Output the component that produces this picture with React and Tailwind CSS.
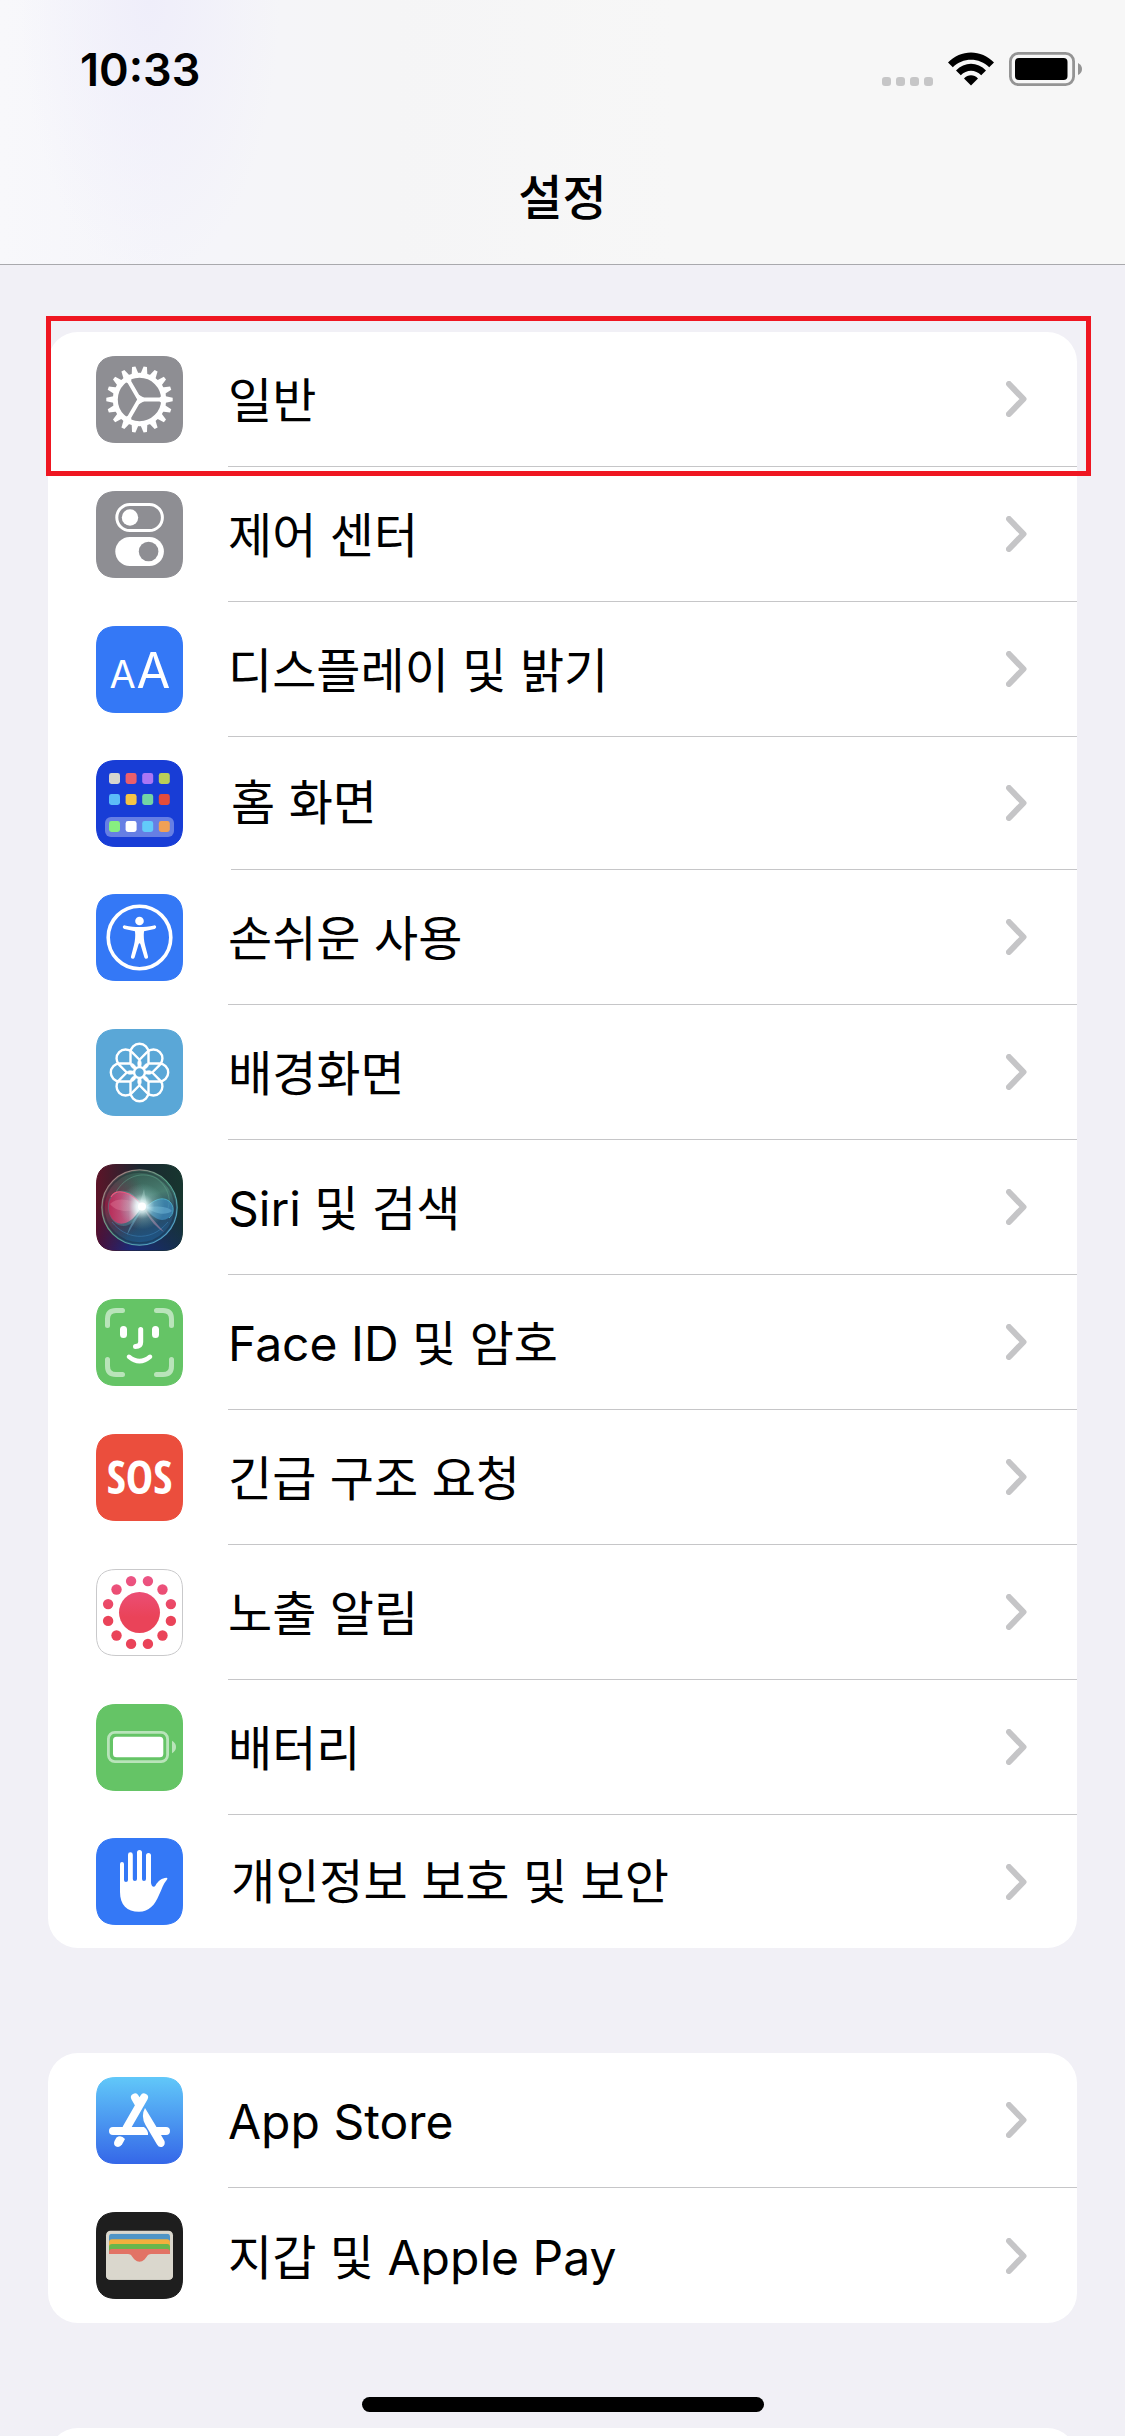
import React from "react";

const ICON = "block h-[87px] w-[87px] shrink-0";

const TILE_SHAPE =
  "M20 .5H67C80 .5 86.5 7 86.5 20V67C86.5 80 80 86.5 67 86.5H20C7 86.5 .5 80 .5 67V20C.5 7 7 .5 20 .5Z";

function Tile({ fill, stroke = fill, children, defs }) {
  return (
    <svg viewBox="0 0 87 87" className={ICON} aria-hidden="true">
      {defs && <defs>{defs}</defs>}
      <path d={TILE_SHAPE} fill={fill} stroke={stroke} strokeWidth="1" />
      {children}
    </svg>
  );
}

const around = (n, start = 0) => Array.from({ length: n }, (_, i) => start + (360 / n) * i);

function GeneralIcon() {
  return (
    <Tile fill="#8e8e93">
      <g transform="translate(43.5 43.5)" fill="#fff">
        {around(18).map((a) => (
          <path key={a} d="M25 -3.6L33.2 -1.7V1.7L25 3.6Z" transform={`rotate(${a})`} />
        ))}
        <circle r="24.2" fill="none" stroke="#fff" strokeWidth="5" />
        {[0, 120, 240].map((a) => (
          <path key={a} d="M0 -2H20L23 -4V4L20 2H0Z" transform={`rotate(${a})`} />
        ))}
        <path d="M4.5 -1.8V1.8L-.7 4.8L-3.8 3L-1.5 0L-3.8 -3L-.7 -4.8Z" />
      </g>
    </Tile>
  );
}

function ControlCenterIcon() {
  return (
    <Tile fill="#8e8e93">
      <rect x="20.8" y="13.4" width="45.6" height="26.2" rx="13.1" fill="none" stroke="#fff" strokeWidth="3" />
      <circle cx="34" cy="26.5" r="8.2" fill="#fff" />
      <rect x="19.3" y="46" width="48.6" height="29" rx="14.5" fill="#fff" />
      <circle cx="52.6" cy="60.5" r="9.8" fill="#8e8e93" />
    </Tile>
  );
}

function DisplayIcon() {
  return (
    <Tile fill="#3478f6">
      <g fill="#fff" fontFamily="Inter, sans-serif" fontWeight="400" textAnchor="middle">
        <text x="26.5" y="61.5" fontSize="38">A</text>
        <text x="57.4" y="61.5" fontSize="49">A</text>
      </g>
    </Tile>
  );
}

const HOME_APPS = [
  [13, ["#d6d5ce", "#ea5f6b", "#ab76f5", "#bacf57"]],
  [34, ["#5cbcf8", "#f5c445", "#72d5a5", "#e54c3b"]],
  [61, ["#87ef80", "#ffffff", "#62cbfa", "#f0a056"]],
];

function HomeScreenIcon() {
  return (
    <Tile fill="#183dd6">
      <rect x="9" y="57" width="69" height="20" rx="6" fill="#fff" opacity="0.34" />
      {HOME_APPS.map(([y, colors]) =>
        colors.map((c, i) => (
          <rect key={c} x={13 + i * 16.6} y={y} width="11" height="11" rx="2.4" fill={c} />
        ))
      )}
    </Tile>
  );
}

function AccessibilityIcon() {
  return (
    <Tile fill="#3478f6">
      <circle cx="43.5" cy="43.5" r="31.3" fill="none" stroke="#fff" strokeWidth="3.6" />
      <circle cx="43.5" cy="27" r="4.3" fill="#fff" />
      <path
        d="M29 31.4C34 32.4 39 33 43.5 33S53 32.4 58 31.4C60.5 31 61 34.4 58.6 35L48 37.2C47.4 42 48 46.5 49 51L52 62.6C52.5 65 49.3 65.8 48.4 63.5L44.5 50.5Q43.5 48 42.5 50.5L38.6 63.5C37.7 65.8 34.5 65 35 62.6L38 51C39 46.5 39.6 42 39 37.2L28.4 35C26 34.4 26.5 31 29 31.4Z"
        fill="#fff"
      />
    </Tile>
  );
}

function WallpaperIcon() {
  return (
    <Tile fill="#5aa7d7">
      <g transform="translate(43.5 43.5)" fill="none" stroke="#fff" strokeWidth="2.4">
        {around(8).map((a) => (
          <g key={a} transform={`rotate(${a})`}>
            <path d="M-9 -9V-19.7A9 9 0 0 1 9 -19.7V-9" />
            <path d="M0 -13.5C2.4 -11 2 -8 1 -5H-1C-2 -8 -2.4 -11 0 -13.5Z" fill="#fff" strokeWidth="0.6" />
          </g>
        ))}
        <circle r="5.4" />
      </g>
    </Tile>
  );
}

function SiriIcon() {
  return (
    <Tile
      fill="url(#siriBg)"
      defs={
        <>
          <linearGradient id="siriBg" x1="0" y1="0" x2="1" y2="0">
            <stop offset="0" stopColor="#5c1428" />
            <stop offset="0.5" stopColor="#1c2730" />
            <stop offset="1" stopColor="#17362f" />
          </linearGradient>
          <linearGradient id="siriLow" x1="0" y1="0" x2="1" y2="0">
            <stop offset="0" stopColor="#4a0f3a" />
            <stop offset="0.4" stopColor="#1b2a7c" />
            <stop offset="1" stopColor="#16304c" />
          </linearGradient>
          <linearGradient id="siriFade" x1="0" y1="0" x2="0" y2="1">
            <stop offset="0.45" stopColor="#000" />
            <stop offset="1" stopColor="#fff" />
          </linearGradient>
          <mask id="siriMask">
            <rect width="87" height="87" fill="url(#siriFade)" />
          </mask>
          <linearGradient id="siriRim" x1="0" y1="0" x2="1" y2="1">
            <stop offset="0" stopColor="#b9707c" />
            <stop offset="0.5" stopColor="#58a487" />
            <stop offset="1" stopColor="#4f9ee0" />
          </linearGradient>
          <linearGradient id="siriBall" x1="0.3" y1="0" x2="0.6" y2="1">
            <stop offset="0" stopColor="#32564c" />
            <stop offset="0.4" stopColor="#487c70" />
            <stop offset="0.65" stopColor="#2a4a62" />
            <stop offset="1" stopColor="#1d5487" />
          </linearGradient>
          <radialGradient id="siriDusk" cx="0.05" cy="0.45" r="0.55">
            <stop offset="0" stopColor="#8a1f42" />
            <stop offset="1" stopColor="#5a2138" stopOpacity="0" />
          </radialGradient>
          <radialGradient id="siriGlow">
            <stop offset="0" stopColor="#fff" />
            <stop offset="0.25" stopColor="#eaffff" stopOpacity="0.8" />
            <stop offset="0.55" stopColor="#b4e4e2" stopOpacity="0.3" />
            <stop offset="1" stopColor="#8fd6cf" stopOpacity="0" />
          </radialGradient>
          <linearGradient id="siriPink" x1="0" y1="0" x2="1" y2="0">
            <stop offset="0" stopColor="#b82c58" />
            <stop offset="0.6" stopColor="#bd6088" />
            <stop offset="1" stopColor="#fff" />
          </linearGradient>
        </>
      }
    >
      <path d={TILE_SHAPE} fill="url(#siriLow)" mask="url(#siriMask)" />
      <circle cx="43.5" cy="43.5" r="37" fill="url(#siriBall)" />
      <circle cx="43.5" cy="43.5" r="37" fill="url(#siriDusk)" />
      <circle cx="43.5" cy="43.5" r="35.5" fill="none" stroke="#16202b" strokeOpacity="0.35" strokeWidth="1.6" />
      <circle cx="43.5" cy="43.5" r="37.6" fill="none" stroke="url(#siriRim)" strokeWidth="1.3" />
      <path d="M18 32C26 14 44 6 60 14C69 20 76 32 72 44" fill="none" stroke="#62a58d" strokeOpacity="0.5" />
      <path d="M16 58C28 74 54 80 72 58" fill="none" stroke="#3d86bd" strokeOpacity="0.5" />
      <path d="M46 43C36 20 14 24 12 40C10 60 34 76 46 43Z" fill="#5aa3b0" opacity="0.4" />
      <path d="M46 42C38 27 20 24 14.5 35C9 50 18 61 27 59.5C36 58 41 50 46 42Z" fill="url(#siriPink)" />
      <path d="M15 33C20 24 36 27 46 42" fill="none" stroke="#f0527c" strokeWidth="1.2" />
      <path d="M14 40C22 32 36 36 46 42C38 48 22 50 14 40Z" fill="#ef91ab" opacity="0.3" />
      <path d="M50 43C58 36 66 32 73 37C81 44 76 56 66 56C58 55 53 49 50 43Z" fill="#3f8ec2" opacity="0.7" />
      <path d="M50 43C58 36 66 32 73 37C79 42 78 50 73 54" fill="none" stroke="#4fb6cf" strokeWidth="1" strokeOpacity="0.8" />
      <path d="M50 43C60 42 72 42 76 47C70 52 58 50 50 43Z" fill="#7cc6e6" opacity="0.4" />
      <path d="M49 46L68 68C62 65 53 56 49 46Z" fill="#c794b4" opacity="0.5" />
      <path d="M46 46L31 71C33 62 39 53 46 46Z" fill="#79c7e8" opacity="0.4" />
      <path d="M48 25L51 42H43Z" fill="#c9f0e6" opacity="0.3" />
      <circle cx="46" cy="42.5" r="23" fill="url(#siriGlow)" />
      <circle cx="46" cy="42.5" r="4" fill="#fff" />
    </Tile>
  );
}

function FaceIdIcon() {
  return (
    <Tile fill="#65c466">
      <g fill="none" stroke="#fff" strokeLinecap="round">
        <path
          d="M11.5 26.500V20Q11.5 11.500 20 11.500H26.500M60.500 11.500H67Q75.500 11.500 75.500 20V26.500M75.500 60.500V67Q75.500 75.500 67 75.500H60.500M26.500 75.500H20Q11.500 75.500 11.500 67V60.500"
          strokeWidth="5"
          opacity="0.55"
        />
        <path d="M27.5 30.500V35.500M59.500 30.500V35.500" strokeWidth="7" />
        <path d="M44.7 30.500V43Q44.700 47.500 39.500 47.500" strokeWidth="5" />
        <path d="M33 57.800Q43.500 66.500 54 57.800" strokeWidth="4.5" />
      </g>
    </Tile>
  );
}

function SosIcon() {
  return (
    <Tile fill="#eb4e3d">
      <text
        x="43.5"
        y="59.5"
        fill="#fff"
        textAnchor="middle"
        fontFamily="'Open Sans Condensed', Roboto, sans-serif"
        fontWeight="700"
        fontSize="46"
      >
        SOS
      </text>
    </Tile>
  );
}

function ExposureIcon() {
  return (
    <Tile
      fill="#ffffff"
      stroke="#c9c9cb"
      defs={
        <linearGradient id="exposure" gradientUnits="userSpaceOnUse" x1="0" y1="7" x2="0" y2="48">
          <stop offset="0" stopColor="#ec5586" />
          <stop offset="1" stopColor="#ea4359" />
        </linearGradient>
      }
    >
      <g fill="url(#exposure)">
        <circle cx="43.5" cy="43.5" r="20.5" />
        {around(12, 15).map((a) => {
          const r = (a * Math.PI) / 180;
          return <circle key={a} cx={43.5 + 32.5 * Math.cos(r)} cy={43.5 + 32.5 * Math.sin(r)} r="5.2" />;
        })}
      </g>
    </Tile>
  );
}

function BatteryIcon() {
  return (
    <Tile fill="#65c466">
      <rect x="12.4" y="28.4" width="59.2" height="29.2" rx="6.5" fill="none" stroke="#fff" strokeWidth="2.8" opacity="0.55" />
      <rect x="17" y="32.8" width="50.3" height="20.4" rx="3.5" fill="#fff" />
      <path d="M76 36.8Q80 39 80 43T76 49.2Z" fill="#fff" opacity="0.55" />
    </Tile>
  );
}

function PrivacyIcon() {
  return (
    <Tile fill="#3478f6">
      <path
        d="M24 26a2 2 0 0 1 4 0V42a2 2 0 0 0 4 0V16.7a2.4 2.4 0 0 1 4.8 0V41a2.1 2.1 0 0 0 4.2 0V14.5a2.5 2.5 0 0 1 5 0V41a2 2 0 0 0 4 0V17.5a2.5 2.5 0 0 1 5 0V45C55.8 49 58 50 59.5 47.5C62 43 66 40 70.5 39.8C71.7 39.8 71.6 41 70.7 42C67 46 66 51 63 57C59 67 53 73.7 43 73.7C31 73.7 24 67 24 54Z"
        fill="#fff"
      />
    </Tile>
  );
}

function AppStoreIcon() {
  return (
    <Tile
      fill="url(#appStore)"
      defs={
        <linearGradient id="appStore" gradientUnits="userSpaceOnUse" x1="0" y1="0" x2="0" y2="87">
          <stop offset="0" stopColor="#61c8f9" />
          <stop offset="1" stopColor="#3567e8" />
        </linearGradient>
      }
    >
      <path
        d="M39 20.500L43 27.500M48 20.500L30.500 51M17 54H30M66 54H70"
        fill="none"
        stroke="#fff"
        strokeWidth="8"
        strokeLinecap="round"
      />
      <g fill="#fff">
        <path d="M27 50H48Q52.500 53.500 52 58H27Z" />
        <path d="M49 31L60.500 50H70V58H65L68.500 64Q69.500 68 66.500 69.700Q63 71 61 67.500L49.500 48Q44.500 39 49 31Z" />
        <path d="M20.500 60.500Q25 57.500 29 62L26 67.500Q23.500 71 20 69.500Q17 67.500 18.500 64Z" />
      </g>
    </Tile>
  );
}

function WalletIcon() {
  return (
    <Tile
      fill="#1e1e1e"
      defs={
        <clipPath id="walletCards">
          <rect x="13" y="21.7" width="61" height="40" rx="3" />
        </clipPath>
      }
    >
      <rect x="10" y="18.8" width="67" height="49" rx="4.5" fill="#dad7cd" />
      <g clipPath="url(#walletCards)">
        <rect x="13" y="21.7" width="61" height="20" fill="#4f95c6" />
        <rect x="13" y="27.3" width="61" height="20" rx="3" fill="#f2b03d" />
        <rect x="13" y="32" width="61" height="20" rx="3" fill="#69b64c" />
        <rect x="13" y="37" width="61" height="20" rx="3" fill="#e27365" />
      </g>
      <path
        d="M10 42H32C35.5 42 36 45 38.5 47.5Q43.5 52 48.5 47.5C51 45 51.5 42 55 42H77V63.3Q77 67.8 72.5 67.8H14.5Q10 67.8 10 63.3Z"
        fill="#dad7cd"
      />
    </Tile>
  );
}

const MAIN_ROWS = [
  { label: "일반", Icon: GeneralIcon },
  { label: "제어 센터", Icon: ControlCenterIcon },
  { label: "디스플레이 및 밝기", Icon: DisplayIcon },
  { label: "홈 화면", Icon: HomeScreenIcon, compact: true },
  { label: "손쉬운 사용", Icon: AccessibilityIcon },
  { label: "배경화면", Icon: WallpaperIcon },
  { label: "Siri 및 검색", Icon: SiriIcon },
  { label: "Face ID 및 암호", Icon: FaceIdIcon },
  { label: "긴급 구조 요청", Icon: SosIcon },
  { label: "노출 알림", Icon: ExposureIcon },
  { label: "배터리", Icon: BatteryIcon },
  { label: "개인정보 보호 및 보안", Icon: PrivacyIcon, compact: true },
];

const STORE_ROWS = [
  { label: "App Store", Icon: AppStoreIcon },
  { label: "지갑 및 Apple Pay", Icon: WalletIcon },
];

function Chevron() {
  return (
    <svg viewBox="0 0 21 36" className="h-9 w-[21px] shrink-0" aria-hidden="true">
      <path d="M3 3L17.500 18L3 33" fill="none" stroke="#c5c5c7" strokeWidth="6" strokeLinecap="round" strokeLinejoin="round" />
    </svg>
  );
}

function Row({ label, Icon, compact, last }) {
  return (
    <li>
      <button
        type="button"
        className={`flex w-full items-center pl-12 text-left ${compact ? "h-[133px] gap-12" : "h-[135px] gap-[45px]"}`}
      >
        <Icon />
        <span
          className={`flex h-full min-w-0 flex-1 items-center justify-between pr-[50px] ${
            last ? "" : "border-b border-[#c6c6c8]"
          }`}
        >
          <span className={`leading-[72px] ${compact ? "" : "pt-1"}`}>{label}</span>
          <Chevron />
        </span>
      </button>
    </li>
  );
}

function Group({ rows, children }) {
  return (
    <section className="relative mx-12 shrink-0 rounded-[30px] bg-white">
      <ul>
        {rows.map((row, i) => (
          <Row key={row.label} {...row} last={i === rows.length - 1} />
        ))}
      </ul>
      {children}
    </section>
  );
}

function StatusIcons() {
  return (
    <div className="flex items-center gap-[15px]">
      <div className="flex gap-[5px] self-end">
        {[0, 1, 2, 3].map((i) => (
          <span key={i} className="h-[9px] w-[9px] rounded-[3px] bg-[#c6c6c7]" />
        ))}
      </div>
      <svg viewBox="0 0 46 34" className="h-[34px] w-[46px]" aria-hidden="true">
        <path d="M0 10.500C12.500 -3 33.500 -3 46 10.500L41.200 15.300C31.500 5.200 14.500 5.200 4.800 15.300Z" />
        <path d="M8 18.500C16.500 9.500 29.500 9.500 38 18.500L33.200 23.300C27.500 17.200 18.500 17.200 12.800 23.300Z" />
        <path d="M16 26.500C20 22.300 26 22.300 30 26.500L23 33.500Z" />
      </svg>
      <svg viewBox="0 0 74 34" className="h-[34px] w-[74px]" aria-hidden="true">
        <rect x="1.4" y="1.4" width="63.2" height="31.2" rx="8" fill="none" stroke="#949494" strokeWidth="2.8" />
        <rect x="6" y="6" width="52.5" height="22" rx="4" />
        <path d="M69 11Q73 13 73 17T69 23Z" fill="#949494" />
      </svg>
    </div>
  );
}

export default function App() {
  return (
    <div className="relative flex h-screen flex-col overflow-hidden bg-[#f1f0f6] font-['Inter','Noto_Sans_CJK_KR',sans-serif] text-5xl text-black">
      <header className="shrink-0 border-b border-[#a9a9ad] bg-[#f7f7f7] bg-[radial-gradient(ellipse_130px_280px_at_150px_0px,#efeefa,transparent),linear-gradient(90deg,#f8f8fb,#f5f5fa_15%,#f5f5f6_35%,#f7f7f7_60%)]">
        <div className="flex h-[138px] items-center justify-between pr-[42px] pl-20">
          <time className="text-[45px] font-semibold">10:33</time>
          <StatusIcons />
        </div>
        <h1 className="pt-[30px] pb-9 text-center leading-[60px] font-medium">설정</h1>
      </header>

      <main className="flex shrink-0 flex-col gap-[105px] pt-[67px]">
        <Group rows={MAIN_ROWS}>
          <div className="pointer-events-none absolute -top-4 -right-3.5 -left-0.5 h-40 border-[5px] border-[#ef1621]" />
        </Group>
        <Group rows={STORE_ROWS} />
        <section className="mx-12 h-[135px] shrink-0 rounded-[30px] bg-white" />
      </main>

      <div className="absolute bottom-6 left-1/2 h-[15px] w-[402px] -translate-x-1/2 rounded-full bg-black" />
    </div>
  );
}
